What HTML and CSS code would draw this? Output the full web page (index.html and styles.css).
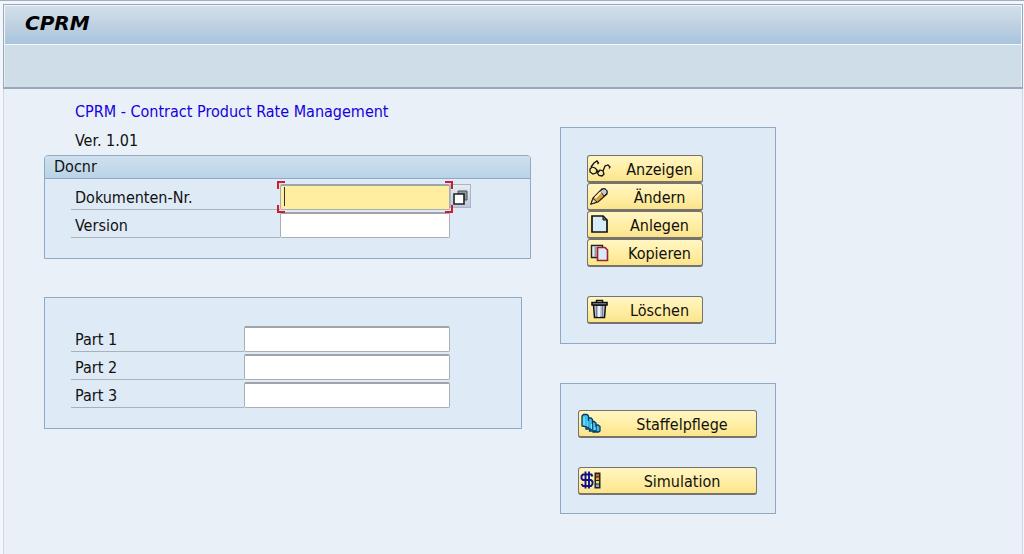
FILE: index.html
```html
<!DOCTYPE html>
<html lang="de">
<head>
<meta charset="utf-8">
<meta name="viewport" content="width=device-width, initial-scale=1">
<title>CPRM</title>
<link rel="stylesheet" href="styles.css">
</head>
<body>
<div class="window">
  <header class="header">
    <h1 class="title">CPRM</h1>
    <div class="toolbar"></div>
  </header>
  <main class="content">
    <form class="column">
      <p class="heading">CPRM - Contract Product Rate Management</p>
      <p class="release">Ver. 1.01</p>
      <section class="group group-doc">
        <h2 class="group-title">Docnr</h2>
        <div class="rows">
          <div class="row">
            <label class="label label-doc" for="docnr">Dokumenten-Nr.</label>
            <span class="focus">
              <input class="field field-active" id="docnr" type="text">
              <span class="caret"></span>
              <span class="corner top left"></span><span class="corner top right"></span>
              <span class="corner bottom left"></span><span class="corner bottom right"></span>
            </span>
            <button class="match" type="button" aria-label="Suchhilfe">
              <svg width="16" height="16" viewBox="0 0 16 16"><path d="M5 1h9v9h-3V4H5z" fill="#8b9a9c" stroke="#4c5658"/><path d="M1 4h10v10H1z" fill="#fff" stroke="#222" stroke-width="1.6"/></svg>
            </button>
          </div>
          <div class="row">
            <label class="label label-doc" for="version">Version</label>
            <input class="field field-doc" id="version" type="text">
          </div>
        </div>
      </section>
      <section class="group group-parts">
        <div class="row">
          <label class="label label-part" for="part1">Part 1</label>
          <input class="field field-part" id="part1" type="text">
        </div>
        <div class="row">
          <label class="label label-part" for="part2">Part 2</label>
          <input class="field field-part" id="part2" type="text">
        </div>
        <div class="row">
          <label class="label label-part" for="part3">Part 3</label>
          <input class="field field-part" id="part3" type="text">
        </div>
      </section>
    </form>
    <div class="column">
      <section class="group actions">
        <button class="button" type="button">
          <svg class="icon" viewBox="0 0 22 22"><g fill="none" stroke="#111" stroke-width="1.3"><path d="M3 9l3 1 2 2-1 3-3 1-3-2v-3zM11 12l3 1 1 3-2 2-3-.5-1.500-2.500zM8 13l2 .5M2 9l3-4 3-2 1.500 2-1 1M14 13l2-5 3-1 2 2-1 1.500"/></g></svg>
          <span class="caption">Anzeigen</span>
        </button>
        <button class="button" type="button">
          <svg class="icon" viewBox="0 0 22 22"><path d="M2 18l2-6L13 3h3l2 2v3l-9 8z" fill="#e0a02f" stroke="#222" stroke-width="1.3"/><path d="M11 5l3-2h2l2 2v2l-3 3z" fill="#c3c9d6" stroke="#222"/><path d="M6 12l6-6" stroke="#fff0c0" stroke-width="2"/><path d="M4 12.500l4 3.500-6 2z" fill="#f4e2bb" stroke="#222"/></svg>
          <span class="caption">Ändern</span>
        </button>
        <button class="button" type="button">
          <svg class="icon" viewBox="0 0 22 22"><path d="M3 2h11l4 4v12H3z" fill="#d8edf9" stroke="#111" stroke-width="1.7"/><path d="M14 2v4h4z" fill="#65757e" stroke="#111"/></svg>
          <span class="caption">Anlegen</span>
        </button>
        <button class="button" type="button">
          <svg class="icon" viewBox="0 0 22 22"><path d="M2.500 3.500h11v12h-11z" fill="#e4edf7" stroke="#222" stroke-width="1.4"/><path d="M6.500 5v10" stroke="#8e9ca8" stroke-width="2"/><path d="M8.500 5.500h7.500l2.500 2.500v10.500h-10z" fill="#d8eafa" stroke="#a61c28" stroke-width="1.6"/></svg>
          <span class="caption">Kopieren</span>
        </button>
        <button class="button button-delete" type="button">
          <svg class="icon" viewBox="0 0 22 22"><path d="M4.500 6h12L15.500 18.500h-10z" fill="#c5cbe0" stroke="#111" stroke-width="1.5"/><path d="M7.500 7v11M13.500 7v11" stroke="#777f9c" stroke-width="1.4"/><path d="M10 7v11" stroke="#fff" stroke-width="1.5"/><path d="M3 3.500h15v2.500H3z" fill="#8b939d" stroke="#111" stroke-width="1.6"/><path d="M7.500 3V1.500h6V3" fill="none" stroke="#111" stroke-width="1.5"/></svg>
          <span class="caption">Löschen</span>
        </button>
      </section>
      <section class="group tools">
        <button class="button" type="button">
          <svg class="icon" viewBox="0 0 22 22"><g fill="#3cc0f2" stroke="#073b5c" stroke-width="1.300"><path d="M13 14l2-2h3l2 1.500V18l-1.500 1H13z"/><path d="M9.500 10l2-1.500h2.500l2 1.500v8H9.500z"/><path d="M6 7l2-2h3l1.500 1.500V16H6z"/><path d="M2 3l1.500-1.500H7L8.500 3v11.500L2 13z"/></g><path d="M4 4v8M8 8v6M11.500 11v5M15 14v3" stroke="#7ce2ff" stroke-width="1.300"/></svg>
          <span class="caption">Staffelpflege</span>
        </button>
        <button class="button" type="button">
          <svg class="icon" viewBox="0 0 22 22"><path d="M12.500 6.500L11.500 4.500H3L1.500 6v2.500L3 10h8l1.500 1.500V14L11 16H3l-1.500-2M5.500 1.500v17M9 1.500v17" fill="none" stroke="#10128b" stroke-width="1.900"/><path d="M14.500 2.500h6v16h-6z" fill="#222"/><path d="M16 4h3v2.500h-3z" fill="#c9661b"/><path d="M16 7.500h3V10h-3z" fill="#e0a22c"/><path d="M16 11h3v2.500h-3z" fill="#f4dd4b"/><path d="M16 14.500h3V17h-3z" fill="#86aeda"/></svg>
          <span class="caption">Simulation</span>
        </button>
      </section>
    </div>
  </main>
</div>
</body>
</html>
```
FILE: styles.css
```css
* {
  box-sizing: border-box;
}

body {
  margin: 0;
  background: #f3f6fb;
  color: #111;
  font-family: "DejaVu Sans Condensed", "Noto Sans", sans-serif;
  font-size: 16px;
  line-height: 20px;
}

h1, h2, p {
  margin: 0;
  font-size: inherit;
  font-weight: normal;
}

button, input {
  font: inherit;
  color: inherit;
}

.window {
  min-height: 100vh;
  padding: 3px 1px 0 3px;
  border-top: 1px solid #a3adc4;
}

.header {
  border: 1px solid #98a9bc;
  border-bottom-width: 2px;
  background: #cfdde8;
}

.title {
  height: 40px;
  padding: 7px 20px;
  border: 1px solid #f1f6fa;
  background: linear-gradient(#d3e0eb, #bdd0e1 55%, #a9c4de);
  font-family: "DejaVu Sans", "Noto Sans", sans-serif;
  font-size: 20px;
  font-weight: bold;
  font-style: italic;
  color: #000;
}

.toolbar {
  height: 42px;
  border: solid #e6eef4;
  border-width: 0 1px;
}

.content {
  display: grid;
  grid-template-columns: minmax(0, 487px) 216px;
  gap: 29px;
  min-height: calc(100vh - 89px);
  padding: 13px 40px 0;
  border: solid #d0d7e4;
  border-width: 0 1px;
  background: #e9f0f7;
}

.heading {
  padding-left: 31px;
  color: #1500e0;
}

.release {
  margin-top: 9px;
  padding-left: 31px;
}

.group {
  border: 1px solid #8fa9c7;
  background: #deeaf6;
}

.group-doc {
  margin-top: 4px;
  border-radius: 4px 4px 0 0;
}

.group-title {
  height: 23px;
  padding: 1px 9px 0;
  border-bottom: 1px solid #8fa9c7;
  border-radius: 3px 3px 0 0;
  background: linear-gradient(#cfe0ee, #b9d3e6);
}

.rows {
  display: grid;
  gap: 2px;
  padding: 5px 26px 20px;
}

.row {
  display: flex;
  height: 26px;
}

.label {
  padding: 4px 4px 0;
  border-bottom: 1px solid #a9b1b9;
}

.label-doc {
  width: 209px;
}

.label-part {
  width: 173px;
}

.field {
  min-width: 0;
  padding: 0 4px;
  border: 1px solid #a8aeb4;
  border-top: 2px solid #a0a4a8;
  border-radius: 2px;
  background: #fff;
  outline: none;
}

.field-doc, .focus {
  width: 170px;
}

.field-part {
  width: 206px;
}

.focus {
  position: relative;
}

.field-active {
  width: 100%;
  height: 100%;
  background: #ffeda0;
}

.caret {
  position: absolute;
  left: 4px;
  top: 3px;
  width: 1px;
  height: 19px;
  background: #333;
}

.corner {
  position: absolute;
  width: 8px;
  height: 8px;
  border: 0 solid #d01c30;
}

.top { top: -3px; border-top-width: 2px; }
.bottom { bottom: -3px; border-bottom-width: 2px; }
.left { left: -3px; border-left-width: 2px; }
.right { right: -3px; border-right-width: 2px; }

.match {
  width: 21px;
  height: 24px;
  padding: 3px 2px 0;
  border: 1px solid #aab5c9;
  background: linear-gradient(#e8ecf3, #bdc8dd);
}

.match svg {
  display: block;
}

.group-parts {
  display: grid;
  gap: 2px;
  max-width: 478px;
  margin-top: 38px;
  padding: 28px 26px 20px;
}

.actions {
  margin-top: 25px;
  padding: 27px 72px 19px 26px;
}

.tools {
  display: grid;
  gap: 29px;
  margin-top: 39px;
  padding: 26px 18px 18px 17px;
}

.button {
  display: flex;
  align-items: center;
  width: 100%;
  height: 28px;
  padding: 0 1px;
  border: 1px solid #77736a;
  border-bottom-width: 2px;
  border-radius: 3px;
  background: linear-gradient(#fff6c4, #ffeda0 60%, #fae48c);
}

.button-delete {
  margin-top: 29px;
}

.icon {
  flex: none;
  width: 22px;
  height: 22px;
}

.caption {
  flex: 1;
  padding: 2px 0 0 7px;
  text-align: center;
}
```
